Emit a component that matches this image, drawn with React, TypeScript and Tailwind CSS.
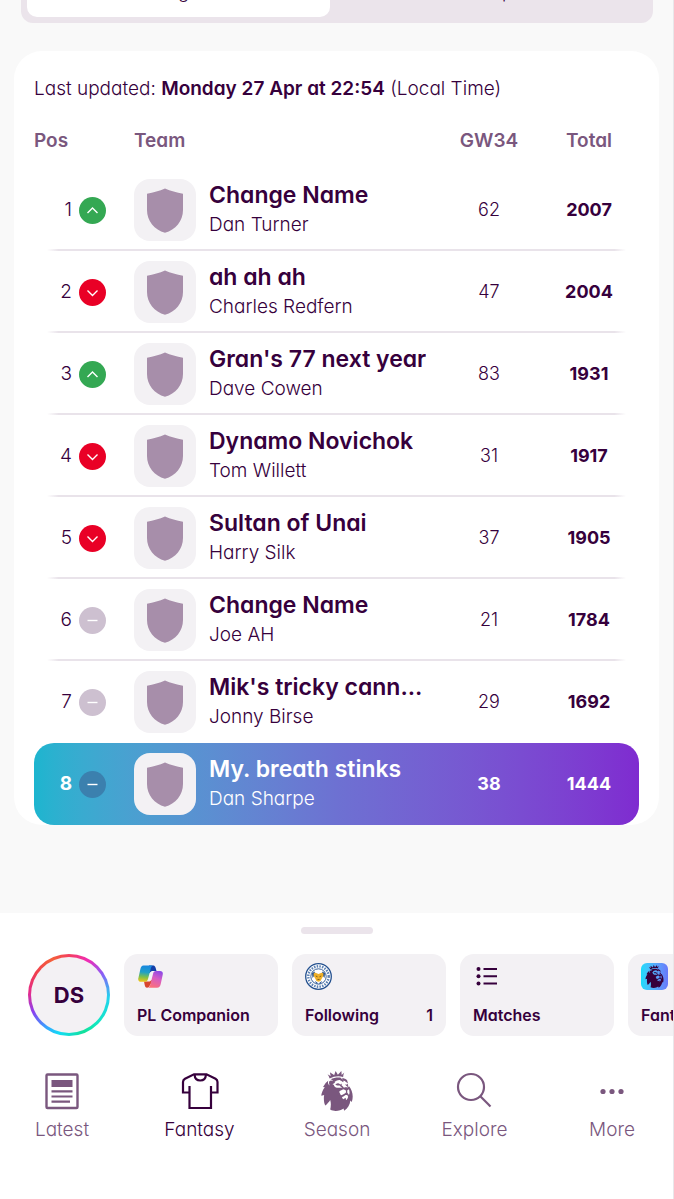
import type { ReactNode } from "react";
import clsx from "clsx";
import { SiPremierleague } from "react-icons/si";

type Movement = "up" | "down" | "same";

interface Entry {
  pos: number;
  movement: Movement;
  team: string;
  manager: string;
  gw: number;
  total: number;
}

const ENTRIES: Entry[] = [
  { pos: 1, movement: "up", team: "Change Name", manager: "Dan Turner", gw: 62, total: 2007 },
  { pos: 2, movement: "down", team: "ah ah ah", manager: "Charles Redfern", gw: 47, total: 2004 },
  { pos: 3, movement: "up", team: "Gran's 77 next year", manager: "Dave Cowen", gw: 83, total: 1931 },
  { pos: 4, movement: "down", team: "Dynamo Novichok", manager: "Tom Willett", gw: 31, total: 1917 },
  { pos: 5, movement: "down", team: "Sultan of Unai", manager: "Harry Silk", gw: 37, total: 1905 },
  { pos: 6, movement: "same", team: "Change Name", manager: "Joe AH", gw: 21, total: 1784 },
  { pos: 7, movement: "same", team: "Mik's tricky cann...", manager: "Jonny Birse", gw: 29, total: 1692 },
  { pos: 8, movement: "same", team: "My. breath stinks", manager: "Dan Sharpe", gw: 38, total: 1444 },
];

const MY_POS = 8;

const MOVEMENT_PATH: Record<Movement, string> = {
  up: "M8.5 16 L13.5 11 L18.5 16",
  down: "M8.5 11.5 L13.5 16.5 L18.5 11.5",
  same: "M8.5 13.5 H18.5",
};

function MovementBadge({ movement, mine }: { movement: Movement; mine: boolean }) {
  return (
    <svg
      viewBox="0 0 27 27"
      className={clsx(
        "size-[27px] shrink-0",
        movement === "up" && "text-[#34a853]",
        movement === "down" && "text-[#e90026]",
        movement === "same" && (mine ? "text-[#3b80ae]" : "text-[#cdc0d0]"),
      )}
      aria-hidden="true"
    >
      <circle cx="13.5" cy="13.5" r="13.5" fill="currentColor" />
      <path d={MOVEMENT_PATH[movement]} fill="none" stroke="#fff" strokeWidth="1.4" />
    </svg>
  );
}

function TeamBadge() {
  return (
    <span className="flex size-[62px] shrink-0 items-center justify-center rounded-2xl bg-[#f3f1f4]">
      <svg viewBox="0 0 36 45" className="h-[45px] w-9" aria-hidden="true">
        <path
          d="M18 0.5 C23.5 2.8 29.5 4.6 36 5.8 V22 C36 33 28.5 42 18 44.8 C7.5 42 0 33 0 22 V5.8 C6.5 4.6 12.5 2.8 18 0.5 Z"
          fill="#a78eaa"
        />
      </svg>
    </span>
  );
}

function EntryRow({ entry }: { entry: Entry }) {
  const mine = entry.pos === MY_POS;
  const divider = entry.pos < MY_POS - 1;

  return (
    <tr
      className={clsx(
        "flex h-[82px] items-center",
        mine && "rounded-[20px] bg-linear-to-r from-[#1cb5cf] via-[#6d71d2] to-[#7f2bd0] text-white",
        divider &&
          "bg-[linear-gradient(to_right,transparent,#e9e3ea_2%,#e9e3ea_98%,transparent)] bg-[length:calc(100%-26px)_2px] bg-bottom bg-no-repeat",
      )}
    >
      <td className="flex w-[100px] items-center gap-[7px]">
        <span className={clsx("w-[38px] text-right", mine && "font-bold")}>{entry.pos}</span>
        <MovementBadge movement={entry.movement} mine={mine} />
      </td>
      <td className="flex min-w-0 flex-1 items-center gap-[13px]">
        <TeamBadge />
        <div className="min-w-0">
          <p className="truncate text-[23px] leading-[30px] font-semibold">{entry.team}</p>
          <p className="truncate text-[19px] leading-[30px]">{entry.manager}</p>
        </div>
      </td>
      <td className={clsx("w-[100px] text-center text-lg", mine && "font-bold")}>{entry.gw}</td>
      <td className="w-[100px] text-center text-lg font-bold">{entry.total}</td>
    </tr>
  );
}

function CompanionIcon() {
  return (
    <svg viewBox="0 0 25 23" className="h-[23px] w-[25px]" aria-hidden="true">
      <defs>
        <linearGradient id="cp-left" x1="0.3" y1="0" x2="0.2" y2="1">
          <stop offset="0" stopColor="#1787e0" />
          <stop offset="0.4" stopColor="#20a0c8" />
          <stop offset="0.7" stopColor="#7fc04a" />
          <stop offset="1" stopColor="#f7c515" />
        </linearGradient>
        <linearGradient id="cp-right" x1="0.8" y1="0" x2="0.4" y2="1">
          <stop offset="0" stopColor="#8a48e8" />
          <stop offset="0.45" stopColor="#d65cc4" />
          <stop offset="1" stopColor="#fb6f7c" />
        </linearGradient>
      </defs>
      <path d="M11 0.4 H15 C17 0.4 17.6 2 18.5 6 H15 C13.5 6 12.5 6.6 11.8 8 L10 7 Z" fill="#123fa8" />
      <path d="M6 16.5 H10.5 C12 16.5 12.6 16 13.2 15 L15 16 L12 20 C11.3 22 10.5 22.7 9 22.7 C7 22.7 6.8 20 6 16.5 Z" fill="#d8452e" />
      <path
        d="M5.5 0.4 H15.5 C13.8 0.6 13.2 1.8 12.8 3.6 L10 14 C9.4 16.2 8.6 16.8 6.5 16.8 H3 C0.6 16.8 -0.2 15 0.4 13 L2.4 4 C3 1.7 3.6 0.4 5.5 0.4 Z"
        fill="url(#cp-left)"
      />
      <path
        d="M18 6 H22 C24.4 6 25.2 7.7 24.7 9.7 L22.8 18.7 C22.2 21.2 21.3 22.7 19 22.7 H9.3 C11.2 22.5 11.8 21.2 12.3 19.4 L15 9 C15.6 6.7 16.2 6 18 6 Z"
        fill="url(#cp-right)"
      />
    </svg>
  );
}

function ClubCrest() {
  return (
    <svg viewBox="0 0 27 27" className="size-[27px]" aria-hidden="true">
      <circle cx="13.5" cy="13.5" r="12.8" fill="#fff" stroke="#23508f" strokeWidth="1.3" />
      <circle cx="13.5" cy="13.5" r="10.2" fill="none" stroke="#5c80b2" strokeWidth="2.4" strokeDasharray="1.5 1.2" />
      <circle cx="13.5" cy="13.5" r="7.7" fill="#fff" stroke="#23508f" strokeWidth="0.9" />
      <path d="M7 10 L10 8.5 L9 13 L7.5 15 Z M20 10 L17 8.5 L18 13 L19.5 15 Z M10 18 L13.5 20.5 L17 18 L16 20.5 H11 Z" fill="#23508f" />
      <path
        d="M8.8 10 L10.5 9.8 L13.5 11 L16.5 9.8 L18.2 10 L18.5 12.5 L16.8 15.5 L15.5 18 L13.5 18.8 L11.5 18 L10.2 15.5 L8.5 12.5 Z"
        fill="#eeb02a"
      />
      <path d="M10.8 13 L12.5 13.8 M16.2 13 L14.5 13.8 M12.5 16.5 H14.5" stroke="#6b4c18" strokeWidth="0.8" />
    </svg>
  );
}

function ListIcon() {
  return (
    <svg viewBox="0 0 27 27" className="size-[27px]" aria-hidden="true">
      <g fill="currentColor">
        <circle cx="5.5" cy="6" r="2" />
        <circle cx="5.5" cy="13.2" r="2" />
        <circle cx="5.5" cy="20.5" r="2" />
      </g>
      <path d="M10.5 6 H24 M10.5 13.2 H24 M10.5 20.5 H24" stroke="currentColor" strokeWidth="2" />
    </svg>
  );
}

function FantasyIcon() {
  return (
    <span className="flex size-[27px] items-center justify-center rounded-md bg-linear-to-r from-[#14dcfb] to-[#6878fa]">
      <SiPremierleague className="size-[23px]" aria-hidden="true" />
    </span>
  );
}

interface ShortcutProps {
  icon: ReactNode;
  label: string;
  count?: number;
}

function Shortcut({ icon, label, count }: ShortcutProps) {
  return (
    <button
      type="button"
      className="flex h-[82px] w-[154px] shrink-0 flex-col justify-between rounded-[14px] bg-[#f3f1f4] px-[13px] pt-[9px] pb-[10px] text-left text-base leading-[22px] font-semibold"
    >
      <span className="flex size-[27px] items-center justify-center">{icon}</span>
      <span className="flex w-full justify-between whitespace-nowrap">
        <span>{label}</span>
        {count !== undefined && <span>{count}</span>}
      </span>
    </button>
  );
}

function NewsIcon() {
  return (
    <svg viewBox="0 0 36 38" className="h-[38px] w-9" fill="none" stroke="currentColor" aria-hidden="true">
      <rect x="2.5" y="2.5" width="31" height="33.5" rx="1" strokeWidth="2.4" />
      <rect x="7.5" y="8" width="21" height="7" fill="currentColor" stroke="none" />
      <path d="M7.5 19.3 H28.5 M7.5 24.5 H28.5 M7.5 29.7 H26" strokeWidth="2.2" />
    </svg>
  );
}

function ShirtIcon() {
  return (
    <svg viewBox="0 0 38 38" className="size-[38px]" fill="none" stroke="currentColor" strokeWidth="2.2" aria-hidden="true">
      <path d="M8.5 14 V36 H30 V14" />
      <path d="M8.5 20.5 H2 V10 C2 8.5 2.8 7.5 4 6.8 L13 2.3 H25.5 L34.5 6.8 C35.7 7.5 36.5 8.5 36.5 10 V20.5 H30" />
      <path d="M13.5 2.3 C13.8 6.3 16 8.5 19.25 8.5 C22.5 8.5 24.7 6.3 25 2.3" />
    </svg>
  );
}

function SearchIcon() {
  return (
    <svg viewBox="0 0 38 38" className="size-[38px]" fill="none" stroke="currentColor" strokeWidth="2.2" aria-hidden="true">
      <circle cx="15" cy="15" r="13" />
      <path d="M24.3 24.3 L34.5 34.5" />
    </svg>
  );
}

function DotsIcon() {
  return (
    <svg viewBox="0 0 38 38" className="size-[38px]" fill="currentColor" aria-hidden="true">
      <circle cx="10" cy="19.5" r="2.6" />
      <circle cx="19" cy="19.5" r="2.6" />
      <circle cx="28" cy="19.5" r="2.6" />
    </svg>
  );
}

const NAV_ITEMS = [
  { label: "Latest", icon: <NewsIcon /> },
  { label: "Fantasy", icon: <ShirtIcon />, active: true },
  { label: "Season", icon: <SiPremierleague className="size-10" aria-hidden="true" /> },
  { label: "Explore", icon: <SearchIcon /> },
  { label: "More", icon: <DotsIcon /> },
];

export default function App() {
  return (
    <div className="flex min-h-screen flex-col overflow-hidden border-r border-[#e9e7ea] bg-[#f9f9f9] font-['Inter','Liberation_Sans',sans-serif] font-light text-[#36003c] [font-feature-settings:'cv11']">
      <div className="-mt-[39px] mr-5 ml-[21px] flex gap-[14px] rounded-xl bg-[#ebe4eb] p-[6px] text-lg leading-[50px]">
        <button type="button" className="flex-1 rounded-[10px] bg-white">
          League
        </button>
        <button type="button" className="flex-1">
          Cup
        </button>
      </div>

      <main className="mx-[14px] mt-7 rounded-[28px] bg-white px-5 pt-6">
        <p className="text-[19px] leading-7">
          Last updated: <strong className="font-semibold">Monday 27 Apr at 22:54</strong> (Local Time)
        </p>
        <table className="mt-[18px] block text-[19px]">
          <thead className="block">
            <tr className="flex h-12 items-start leading-10 text-[#7a577e]">
              <th className="w-[100px] text-left font-semibold">Pos</th>
              <th className="flex-1 text-left font-semibold">Team</th>
              <th className="w-[100px] font-semibold">GW34</th>
              <th className="w-[100px] font-semibold">Total</th>
            </tr>
          </thead>
          <tbody className="block">
            {ENTRIES.map((entry) => (
              <EntryRow key={entry.pos} entry={entry} />
            ))}
          </tbody>
        </table>
      </main>

      <footer className="mt-[88px] flex-1 bg-white pt-[14px] pb-14">
        <div className="mx-auto h-[7px] w-[72px] rounded-full bg-[#ebe4eb]" />
        <div className="mt-5 flex gap-[14px] overflow-hidden pl-7">
          <button
            type="button"
            className="size-[82px] shrink-0 rounded-full bg-[conic-gradient(#f43f5e,#f02bb5_8%,#8b5cf6_16%,#22d3ee_26%,#10e8c0_38%,#12e09a_44%,#12dcf5_54%,#38a0ff_60%,#8b3ff0_68%,#e52c8c_76%,#f03e50_84%,#f4603a_93%,#f43f5e)] p-[3px]"
          >
            <span className="flex size-full items-center justify-center rounded-full bg-[#f3f1f4] text-[22px] font-bold">
              DS
            </span>
          </button>
          <Shortcut icon={<CompanionIcon />} label="PL Companion" />
          <Shortcut icon={<ClubCrest />} label="Following" count={1} />
          <Shortcut icon={<ListIcon />} label="Matches" />
          <Shortcut icon={<FantasyIcon />} label="Fantasy" />
        </div>
        <nav className="mt-9 flex justify-between pr-[21px] pl-[22px]">
          {NAV_ITEMS.map(({ label, icon, active }) => (
            <a
              key={label}
              href="#"
              className={clsx(
                "flex w-20 flex-col items-center gap-[6px] text-[19px] leading-7",
                active ? "text-[#36003c]" : "text-[#7a577e]",
              )}
            >
              <span className="flex h-[38px] items-center">{icon}</span>
              {label}
            </a>
          ))}
        </nav>
      </footer>
    </div>
  );
}
